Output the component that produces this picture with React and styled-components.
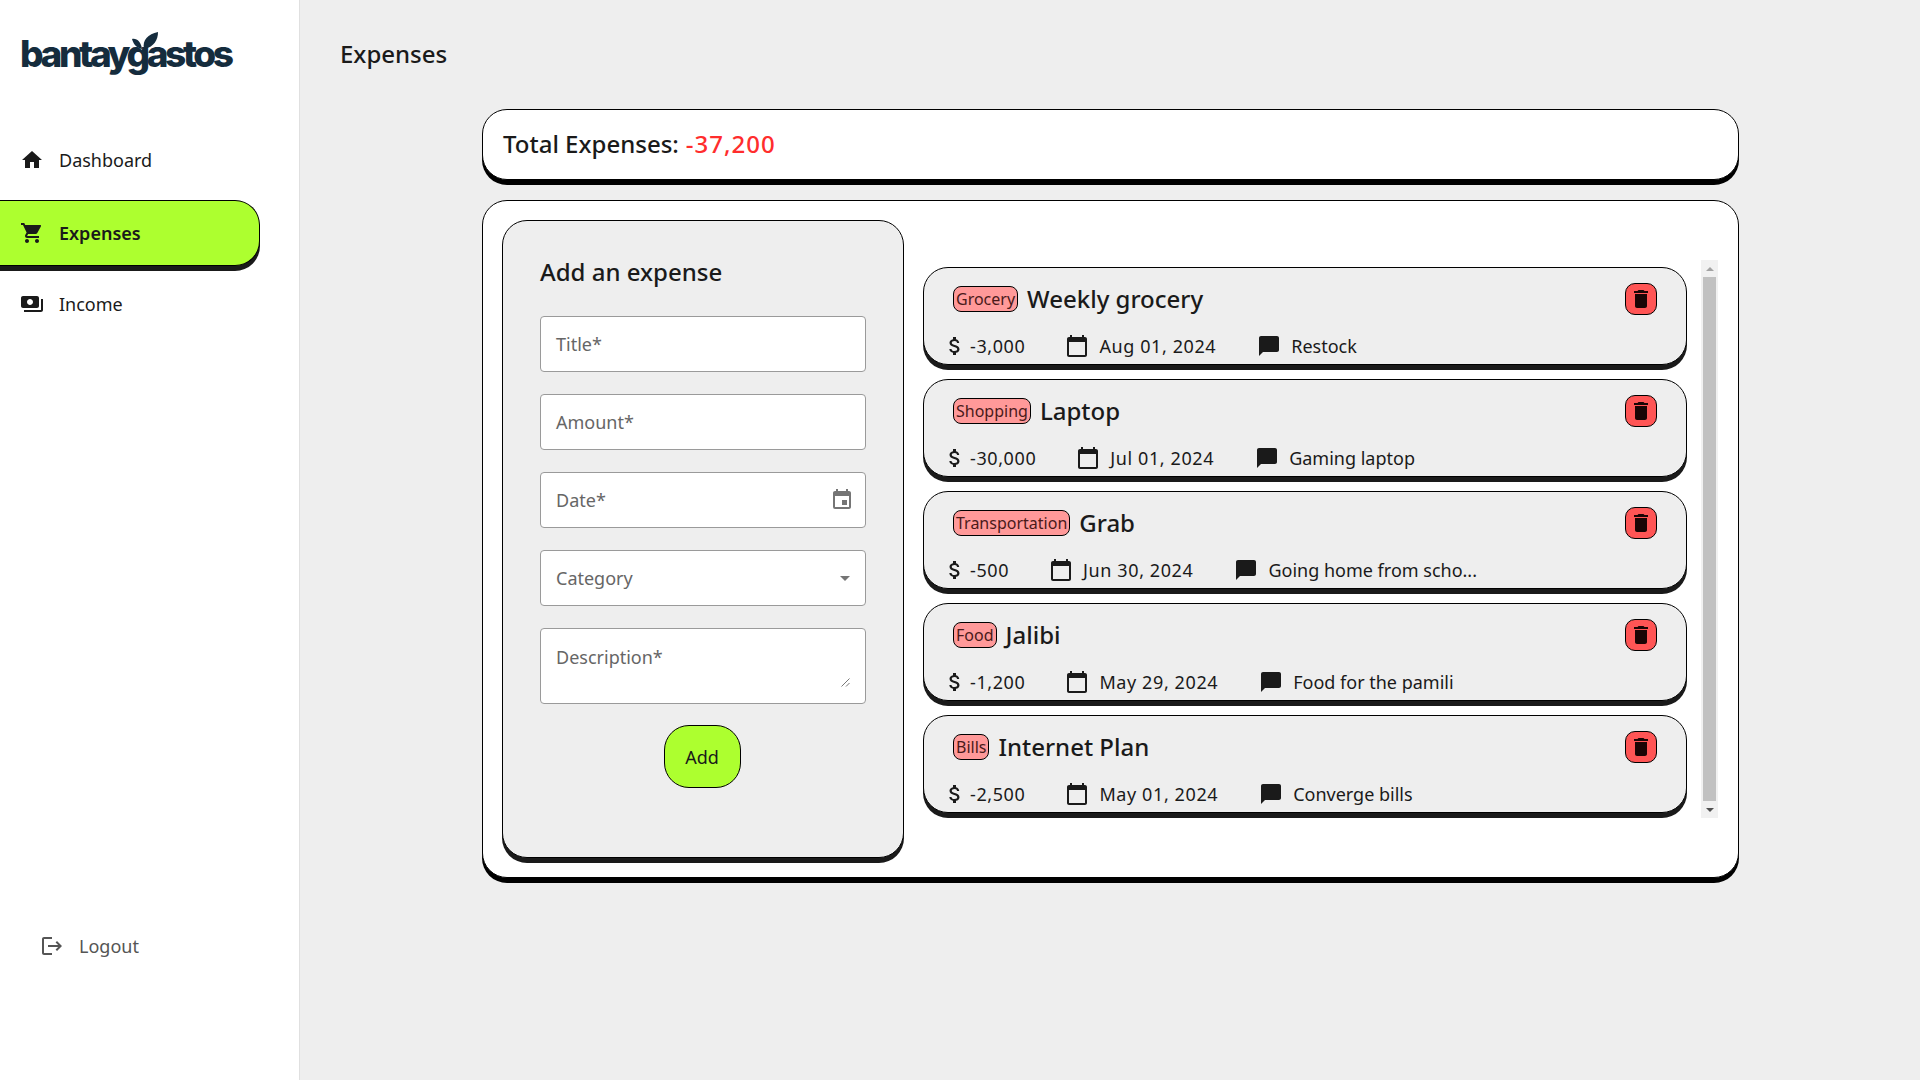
import styled, { createGlobalStyle } from 'styled-components';
import {
  MdHome,
  MdShoppingCart,
  MdPayments,
  MdDelete,
  MdCalendarToday,
  MdChatBubble,
  MdAttachMoney,
  MdLogout,
  MdEvent,
  MdArrowDropDown,
} from 'react-icons/md';

const GlobalStyle = createGlobalStyle`
  * { box-sizing: border-box; }
  html, body { margin: 0; padding: 0; }
  body {
    background: #eeeeee;
    color: #1a1a1a;
    font-family: "Noto Sans", "Open Sans", sans-serif;
  }
`;

const Layout = styled.div`
  display: flex;
  width: 1920px;
  height: 1080px;
  overflow: hidden;
`;

const Sidebar = styled.aside`
  display: flex;
  flex-direction: column;
  width: 300px;
  flex-shrink: 0;
  background: #fff;
  border-right: 1px solid #e0e0e0;
`;

const Logo = styled.div`
  display: flex;
  align-items: center;
  position: relative;
  height: 58px;
  margin: 24px 0 2px 20px;
  font-family: "Inter", sans-serif;
  font-size: 37px;
  font-weight: 800;
  letter-spacing: -3.4px;
  color: #152c3d;
`;

const Leaf = styled.svg`
  position: absolute;
  left: 112px;
  top: 8px;
  width: 26px;
  height: 18px;
`;

const Nav = styled.nav`
  display: flex;
  flex-direction: column;
  margin-top: 40px;
`;

const NavItem = styled.div`
  display: flex;
  align-items: center;
  gap: 15px;
  width: 260px;
  height: ${(p) => (p.$active ? '66px' : '72px')};
  margin: ${(p) => (p.$active ? '4px 0 2px' : '0')};
  padding-left: 20px;
  font-size: 18px;
  font-weight: ${(p) => (p.$active ? 600 : 400)};
  background: ${(p) => (p.$active ? '#adff2f' : 'transparent')};
  border: ${(p) => (p.$active ? '1px solid #000' : 'none')};
  border-left: none;
  border-radius: ${(p) => (p.$active ? '0 25px 25px 0' : '0')};
  box-shadow: ${(p) => (p.$active ? '0 5px 0 #1a1a1a' : 'none')};
  svg { font-size: 24px; flex-shrink: 0; }
`;

const Logout = styled.div`
  display: flex;
  align-items: center;
  gap: 15px;
  margin-top: auto;
  margin-bottom: 122px;
  padding-left: 40px;
  font-size: 18px;
  color: #555;
  svg { font-size: 24px; }
`;

const Content = styled.main`
  flex: 1;
  display: flex;
  flex-direction: column;
  padding: 0 0 0 40px;
`;

const PageTitle = styled.h1`
  margin: 0;
  height: 109px;
  padding-top: 37px;
  font-size: 24px;
  line-height: 34px;
  font-weight: 500;
`;

const Stack = styled.div`
  display: flex;
  flex-direction: column;
  gap: 20px;
  width: 1257px;
  margin-left: 142px;
`;

const Panel = styled.section`
  background: #fff;
  border: 1px solid #000;
  border-radius: 25px;
  box-shadow: 0 5px 0 #000;
`;

const TotalCard = styled(Panel)`
  display: flex;
  align-items: center;
  height: 71px;
  padding: 0 20px 2px;
  font-size: 24px;
  font-weight: 500;
`;

const Negative = styled.span`
  margin-left: 7px;
  color: #ff2d2d;
  letter-spacing: 1px;
`;

const MainCard = styled(Panel)`
  display: flex;
  gap: 19px;
  height: 678px;
  padding: 19px;
`;

const FormPanel = styled.form`
  display: flex;
  flex-direction: column;
  width: 402px;
  height: 638px;
  flex-shrink: 0;
  padding: 0 37px;
  background: #eeeeee;
  border: 1px solid #000;
  border-radius: 25px;
  box-shadow: 0 5px 0 #1a1a1a;
`;

const FormTitle = styled.h2`
  margin: 34px 0 27px;
  font-size: 24px;
  line-height: 34px;
  font-weight: 500;
`;

const Field = styled.div`
  display: flex;
  align-items: ${(p) => (p.$multiline ? 'flex-start' : 'center')};
  justify-content: space-between;
  position: relative;
  height: ${(p) => (p.$multiline ? '76px' : '56px')};
  margin-bottom: 22px;
  padding: ${(p) => (p.$multiline ? '16px 14px 0 15px' : '0 14px 0 15px')};
  background: #fff;
  border: 1px solid #9a9a9a;
  border-radius: 4px;
  font-size: 18px;
  line-height: 24px;
  color: #666;
`;

const DateIcon = styled(MdEvent)`
  margin-right: -3px;
  font-size: 24px;
  color: #757575;
`;

const SelectArrow = styled(MdArrowDropDown)`
  margin-right: -6px;
  font-size: 24px;
  color: #757575;
`;

const Grip = styled.svg`
  position: absolute;
  right: 15px;
  bottom: 16px;
  width: 9px;
  height: 9px;
`;

const AddButton = styled.button`
  align-self: center;
  width: 77px;
  height: 63px;
  margin: -1px 2px 0 0;
  background: #adff2f;
  border: 1px solid #000;
  border-radius: 25px;
  color: #1a1a1a;
  font-family: inherit;
  font-size: 18px;
`;

const ListArea = styled.div`
  display: flex;
  gap: 14px;
  height: 558px;
  margin-top: 40px;
`;

const List = styled.div`
  display: flex;
  flex-direction: column;
  gap: 14px;
  width: 764px;
  padding-top: 7px;
`;

const Card = styled.article`
  display: flex;
  flex-direction: column;
  height: 98px;
  padding: 15px 29px 0 29px;
  background: #eeeeee;
  border: 1px solid #000;
  border-radius: 25px;
  box-shadow: 0 5px 0 #1a1a1a;
`;

const CardTop = styled.div`
  display: flex;
  align-items: center;
  height: 32px;
`;

const Tag = styled.span`
  display: flex;
  align-items: center;
  height: 26px;
  padding: 0 2px;
  margin-right: 9px;
  background: #ff9999;
  border: 1px solid #000;
  border-radius: 8px;
  font-size: 16px;
  color: #4a1a1a;
`;

const CardTitle = styled.h3`
  flex: 1;
  margin: 0;
  padding-bottom: 2px;
  font-size: 24px;
  font-weight: 500;
`;

const DeleteButton = styled.button`
  display: flex;
  align-items: center;
  justify-content: center;
  width: 32px;
  height: 32px;
  padding: 0;
  background: #ff5555;
  border: 1px solid #000;
  border-radius: 10px;
  color: #1a0505;
  svg { font-size: 24px; }
`;

const CardMeta = styled.div`
  display: flex;
  align-items: center;
  margin: 18px 0 0 -10px;
  height: 26px;
  font-size: 18px;
`;

const MetaItem = styled.span`
  display: flex;
  align-items: center;
  gap: ${(p) => p.$gap ?? 10}px;
  margin-right: ${(p) => p.$end ?? 40}px;
  white-space: nowrap;
  letter-spacing: ${(p) => (p.$numeric ? '0.6px' : 'normal')};
  svg { font-size: 24px; flex-shrink: 0; }
`;

const ScrollTrack = styled.div`
  display: flex;
  flex-direction: column;
  align-items: center;
  justify-content: space-between;
  width: 17px;
  background: #f1f1f1;
`;

const ScrollArrow = styled.span`
  width: 0;
  height: 0;
  margin: 7px 0 6px;
  border-left: 4px solid transparent;
  border-right: 4px solid transparent;
  border-top: ${(p) => (p.$down ? '4px solid #505050' : 'none')};
  border-bottom: ${(p) => (p.$down ? 'none' : '4px solid #a3a3a3')};
`;

const ScrollThumb = styled.div`
  flex: 1;
  width: 13px;
  background: #c1c1c1;
`;

const expenses = [
  { id: 1, tag: 'Grocery', title: 'Weekly grocery', amount: '-3,000', date: 'Aug 01, 2024', note: 'Restock' },
  { id: 2, tag: 'Shopping', title: 'Laptop', amount: '-30,000', date: 'Jul 01, 2024', note: 'Gaming laptop' },
  { id: 3, tag: 'Transportation', title: 'Grab', amount: '-500', date: 'Jun 30, 2024', note: 'Going home from scho...' },
  { id: 4, tag: 'Food', title: 'Jalibi', amount: '-1,200', date: 'May 29, 2024', note: 'Food for the pamili' },
  { id: 5, tag: 'Bills', title: 'Internet Plan', amount: '-2,500', date: 'May 01, 2024', note: 'Converge bills' },
];

const App = () => (
  <>
    <GlobalStyle />
    <Layout>
      <Sidebar>
        <Logo>
          bantaygastos
          <Leaf viewBox="0 0 26 18">
            <path d="M10 17C4 16 1 11 0 7c5-1 9 3 10 10z" fill="#152c3d" />
            <path d="M12 17C10 8 16 2 26 0c0 8-4 15-14 17z" fill="#152c3d" />
          </Leaf>
        </Logo>
        <Nav>
          <NavItem><MdHome />Dashboard</NavItem>
          <NavItem $active><MdShoppingCart />Expenses</NavItem>
          <NavItem><MdPayments />Income</NavItem>
        </Nav>
        <Logout><MdLogout />Logout</Logout>
      </Sidebar>
      <Content>
        <PageTitle>Expenses</PageTitle>
        <Stack>
          <TotalCard>
            Total Expenses:<Negative>-37,200</Negative>
          </TotalCard>
          <MainCard>
            <FormPanel>
              <FormTitle>Add an expense</FormTitle>
              <Field>Title*</Field>
              <Field>Amount*</Field>
              <Field>Date*<DateIcon /></Field>
              <Field>Category<SelectArrow /></Field>
              <Field $multiline>
                Description*
                <Grip viewBox="0 0 9 9">
                  <path d="M0.5 8.5L8.5 0.5M5 8.5L8.5 5" stroke="#777" strokeWidth="1" fill="none" />
                </Grip>
              </Field>
              <AddButton type="button">Add</AddButton>
            </FormPanel>
            <ListArea>
              <List>
                {expenses.map((expense) => (
                  <Card key={expense.id}>
                    <CardTop>
                      <Tag>{expense.tag}</Tag>
                      <CardTitle>{expense.title}</CardTitle>
                      <DeleteButton type="button"><MdDelete /></DeleteButton>
                    </CardTop>
                    <CardMeta>
                      <MetaItem $gap={3} $numeric><MdAttachMoney />{expense.amount}</MetaItem>
                      <MetaItem $numeric $end={41}><MdCalendarToday />{expense.date}</MetaItem>
                      <MetaItem><MdChatBubble />{expense.note}</MetaItem>
                    </CardMeta>
                  </Card>
                ))}
              </List>
              <ScrollTrack>
                <ScrollArrow />
                <ScrollThumb />
                <ScrollArrow $down />
              </ScrollTrack>
            </ListArea>
          </MainCard>
        </Stack>
      </Content>
    </Layout>
  </>
);

export default App;
